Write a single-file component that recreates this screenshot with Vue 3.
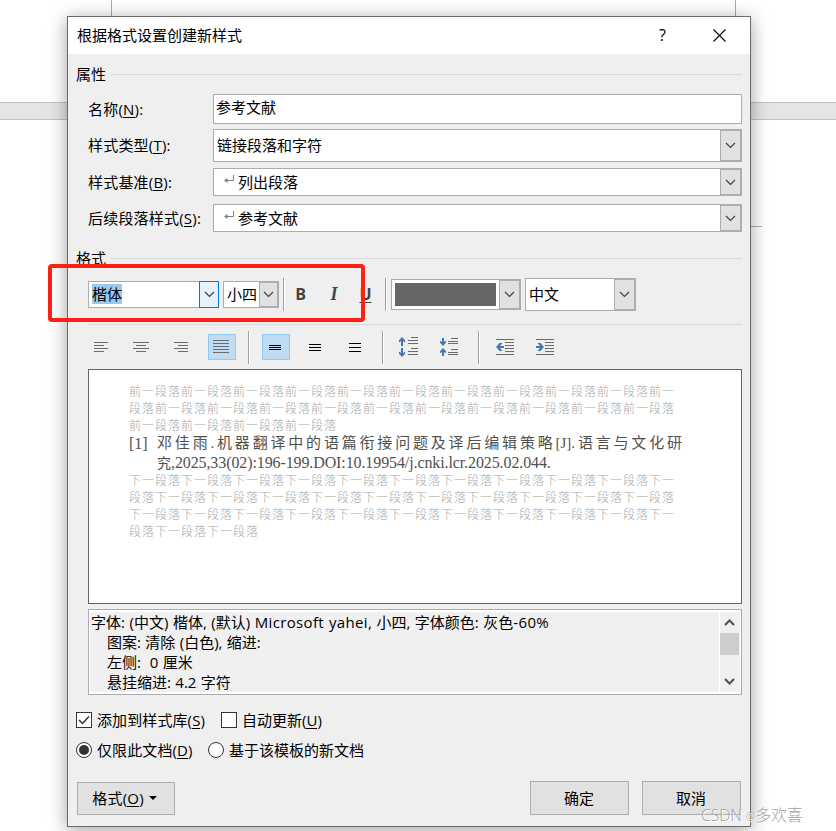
<script setup>
const before = [
  '前一段落'.repeat(10) + '前一',
  '段落' + '前一段落'.repeat(10),
  '前一段落'.repeat(4),
]
const after = [
  '下一段落'.repeat(10) + '下一',
  '段落' + '下一段落'.repeat(10),
  '下一段落'.repeat(10) + '下一',
  '段落' + '下一段落'.repeat(2),
]
</script>

<template>
  <div class="desk">
    <div class="sheet"><div class="margins"></div></div>
    <div class="gap"></div>
    <div class="tick"></div>

    <section class="dialog">
      <header class="title">
        <span class="caption">根据格式设置创建新样式</span>
        <span class="help">?</span>
        <svg class="close" width="13" height="13" viewBox="0 0 13 13"><path d="M.5 .5 12.5 12.5M12.5 .5 .5 12.5" /></svg>
      </header>

      <div class="body">
        <div class="group first"><span>属性</span><i></i></div>

        <div class="field name">
          <label>名称(<u>N</u>):</label>
          <div class="input">参考文献</div>
        </div>
        <div class="field type">
          <label>样式类型(<u>T</u>):</label>
          <div class="combo"><span>链接段落和字符</span><b class="drop"><svg width="11" height="7" viewBox="0 0 11 7"><path d="M1 1 5.5 5.5 10 1" /></svg></b></div>
        </div>
        <div class="field base">
          <label>样式基准(<u>B</u>):</label>
          <div class="combo"><svg class="ret" width="10" height="9" viewBox="0 0 10 9"><path d="M9.5 0V5.5H1" /><path class="tip" d="M0 5.5 3.5 3V8Z" /></svg><span>列出段落</span><b class="drop"><svg width="11" height="7" viewBox="0 0 11 7"><path d="M1 1 5.5 5.5 10 1" /></svg></b></div>
        </div>
        <div class="field next">
          <label>后续段落样式(<u>S</u>):</label>
          <div class="combo"><svg class="ret" width="10" height="9" viewBox="0 0 10 9"><path d="M9.5 0V5.5H1" /><path class="tip" d="M0 5.5 3.5 3V8Z" /></svg><span>参考文献</span><b class="drop"><svg width="11" height="7" viewBox="0 0 11 7"><path d="M1 1 5.5 5.5 10 1" /></svg></b></div>
        </div>

        <div class="group second"><span>格式</span><i></i></div>

        <div class="fontbar">
          <div class="combo font"><span><mark>楷体</mark></span><b class="drop hot"><svg width="11" height="7" viewBox="0 0 11 7"><path d="M1 1 5.5 5.5 10 1" /></svg></b></div>
          <div class="combo size"><span>小四</span><b class="drop"><svg width="11" height="7" viewBox="0 0 11 7"><path d="M1 1 5.5 5.5 10 1" /></svg></b></div>
          <i class="sep"></i>
          <span class="glyph bold">B</span>
          <span class="glyph italic">I</span>
          <span class="glyph under">U</span>
          <i class="sep"></i>
          <div class="combo color"><div class="swatch"></div><b class="drop"><svg width="11" height="7" viewBox="0 0 11 7"><path d="M1 1 5.5 5.5 10 1" /></svg></b></div>
          <div class="combo lang"><span>中文</span><b class="drop"><svg width="11" height="7" viewBox="0 0 11 7"><path d="M1 1 5.5 5.5 10 1" /></svg></b></div>
        </div>

        <div class="rule"></div>

        <div class="parabar">
          <svg class="tool" width="28" height="26" viewBox="0 0 28 26"><path class="g" d="M6 8.5h14M6 11.5h10M6 14.5h14M6 17.5h10" /></svg>
          <svg class="tool" width="28" height="26" viewBox="0 0 28 26"><path class="g" d="M5 8.5h16M8 11.5h10M5 14.5h16M8 17.5h10" /></svg>
          <svg class="tool" width="28" height="26" viewBox="0 0 28 26"><path class="g" d="M6 8.5h14M10 11.5h10M6 14.5h14M10 17.5h10" /></svg>
          <svg class="tool on" width="28" height="26" viewBox="0 0 28 26"><path class="g" d="M5 6.5h16M5 9.5h16M5 12.5h16M5 15.5h16M5 18.5h16" /></svg>
          <i class="sep"></i>
          <svg class="tool on" width="28" height="26" viewBox="0 0 28 26"><path class="k" d="M7 11.5h12M7 13.5h12M7 15.5h12" /></svg>
          <svg class="tool" width="28" height="26" viewBox="0 0 28 26"><path class="k" d="M7 10.5h12M7 13.5h12M7 16.5h12" /></svg>
          <svg class="tool" width="28" height="26" viewBox="0 0 28 26"><path class="k" d="M7 9.5h12M7 13.5h12M7 17.5h12" /></svg>
          <i class="sep near"></i>
          <svg class="tool" width="28" height="26" viewBox="0 0 28 26">
            <path class="a" d="M8 3 11 6.2V8.5L9 7V12H7V7L5 8.5V6.2ZM8 23 11 19.8V17.5L9 19V14H7V19L5 17.5V19.8Z" />
            <path class="g" d="M17 3.5h7M14 6.5h10M14 9.5h10M17 14.5h7M14 17.5h10M14 20.5h10" />
          </svg>
          <svg class="tool last" width="28" height="26" viewBox="0 0 28 26">
            <path class="a" d="M9 12 12 8.7V6.7L10 8V4H8V8L6 6.7V8.7ZM9 14 12 17.3V19.3L10 18V22H8V18L6 19.3V17.3Z" />
            <path class="g" d="M17 4.5h7M14 7.5h10M14 9.5h10M17 15.5h7M14 18.5h10M14 20.5h10" />
          </svg>
          <i class="sep"></i>
          <svg class="tool" width="28" height="26" viewBox="0 0 28 26">
            <path class="g" d="M4 5.5h18M13 8.5h9M13 11.5h9M13 14.5h9M13 17.5h9M4 20.5h18" />
            <path class="a" d="M4 13 7.5 9H10.5L8 12H12V14H8L10.5 17H7.5Z" />
          </svg>
          <svg class="tool" width="28" height="26" viewBox="0 0 28 26">
            <path class="g" d="M4 5.5h18M13 8.5h9M13 11.5h9M13 14.5h9M13 17.5h9M4 20.5h18" />
            <path class="a" d="M12 13 8.5 9H5.5L8 12H4V14H8L5.5 17H8.5Z" />
          </svg>
        </div>

        <div class="preview">
          <div v-for="(line, i) in before" :key="'b' + i" class="ghost">{{ line }}</div>
          <div class="ref">
            <span class="num">[1]</span>
            <div class="lines">
              <div class="spread">邓佳雨.机器翻译中的语篇衔接问题及译后编辑策略[J].语言与文化研</div>
              <div class="tail">究<span>,2025,33(02):196-199.DOI:10.19954/j.cnki.lcr.2025.02.044.</span></div>
            </div>
          </div>
          <div v-for="(line, i) in after" :key="'a' + i" class="ghost">{{ line }}</div>
        </div>

        <div class="info">
          <div class="desc">
            <p class="wide">字体: (中文) 楷体, (默认) <span class="face">Microsoft yahei</span>, 小四, 字体颜色: 灰色<span class="face">-60%</span></p>
            <p class="in">图案: 清除 (白色), 缩进:</p>
            <p class="in">左侧:&nbsp; 0 厘米</p>
            <p class="in">悬挂缩进: 4.2 字符</p>
          </div>
          <div class="scroll">
            <svg width="19" height="21" viewBox="0 0 19 21"><path d="M5 13 9.5 8.5 14 13" /></svg>
            <div class="thumb"></div>
            <svg width="19" height="21" viewBox="0 0 19 21"><path d="M5 8 9.5 12.5 14 8" /></svg>
          </div>
        </div>

        <div class="opts checks">
          <svg width="16" height="16" viewBox="0 0 16 16"><rect x=".5" y=".5" width="15" height="15" /><path d="M3 8 6.5 11.5 13 4.5" /></svg>
          <span class="o1">添加到样式库(<u>S</u>)</span>
          <svg width="16" height="16" viewBox="0 0 16 16"><rect x=".5" y=".5" width="15" height="15" /></svg>
          <span>自动更新(<u>U</u>)</span>
        </div>
        <div class="opts radios">
          <svg width="16" height="16" viewBox="0 0 16 16"><circle cx="8" cy="8" r="7.5" /><circle class="dot" cx="8" cy="8" r="5" /></svg>
          <span class="o2">仅限此文档(<u>D</u>)</span>
          <svg width="16" height="16" viewBox="0 0 16 16"><circle cx="8" cy="8" r="7.5" /></svg>
          <span>基于该模板的新文档</span>
        </div>

        <footer class="actions">
          <div class="btn fmt"><span>格式(<u>O</u>)</span><svg width="8" height="4" viewBox="0 0 8 4"><path d="M0 0H8L4 4Z" /></svg></div>
          <div class="btn">确定</div>
          <div class="btn">取消</div>
        </footer>
      </div>
    </section>

    <div class="callout"></div>
    <div class="watermark">CSDN <small>@</small>多欢喜</div>
  </div>
</template>

<style>
body { background: #fff; overflow: hidden; }
</style>

<style scoped>
* { box-sizing: border-box; }
.desk { position: relative; width: 836px; height: 831px; overflow: hidden; background: #fff; color: #000; font: 15px/20px "Open Sans", "Noto Sans CJK SC", sans-serif; white-space: nowrap; }
.sheet { height: 102px; padding-left: 111px; }
.margins { width: 625px; height: 40px; border: solid #ababab; border-width: 0 1px; }
.gap { height: 18px; background: #e5e5e5; border: solid #c3c3c3; border-width: 1px 0; }
.tick { margin-left: 740px; width: 22px; height: 107px; border-bottom: 1px solid #ababab; }

.dialog { position: absolute; left: 67px; top: 16px; width: 684px; height: 811px; background: #efefef; border: 1px solid #6b6b6b; box-shadow: 0 3px 17px rgba(0,0,0,.38); }
.title { height: 37px; background: #fff; display: flex; align-items: center; padding: 0 24px 0 9px; }
.caption { flex: 1; padding-bottom: 2px; }
.help { width: 8px; margin-right: 46px; font-size: 16px; padding-bottom: 1px; }
.close path { stroke: #000; stroke-width: 1.1; fill: none; }
.body { padding: 0 8px 0 9px; display: flex; flex-direction: column; }
.group { display: flex; align-items: center; height: 20px; margin-left: -1px; }
.group i { flex: 1; height: 1px; margin-left: 5px; background: #d9d9d9; }
.group.first { margin-top: 10px; }
.group.second { margin-top: 16px; }

.field { display: flex; align-items: center; padding-left: 11px; }
.field label { width: 125px; letter-spacing: .2px; }
u { text-decoration: none; box-shadow: 0 1px 0 #000; display: inline-block; line-height: 16px; }
.input { flex: 1; height: 30px; border: 1px solid #abadb3; background: #fff; padding: 2px 2px; }
.field.name { margin-top: 10px; }
.field.type { margin-top: 5px; }
.field.type label { padding-bottom: 1px; }
.field.base { margin-top: 6px; }
.field.next { margin-top: 8px; }
.field .combo { flex: 1; height: 28px; }
.field.type .combo { height: 33px; }
.field.type .combo > span { padding-bottom: 2px; }
.combo { display: flex; border: 1px solid #abadb3; background: #fff; align-items: stretch; }
.combo > span { flex: 1; padding-left: 3px; display: flex; align-items: center; }
.ret { margin: 6px 1px 0 10px; flex: none; }
.ret path { fill: none; stroke: #808080; }
.ret .tip { fill: #808080; stroke: none; }
.drop { flex: none; width: 21px; display: flex; align-items: center; justify-content: center; background: #e1e1e1; border: 1px solid #abadb3; }
.drop path { fill: none; stroke: #404040; stroke-width: 1.2; }
.drop.hot { width: 20px; margin: -1px 0; background: #e5f1fb; border-color: #0078d7; }

.fontbar { display: flex; align-items: center; height: 33px; margin: 10px 0 0 11px; }
.font { width: 131px; height: 27px; }
.font > span { padding: 0 0 2px 3px; }
mark { background: #99c9ef; color: #000; line-height: 20px; }
.font .drop.hot { width: 20px; margin-right: -1px; }
.size { width: 56px; height: 27px; margin-left: 4px; }
.size > span, .lang > span { padding-bottom: 2px; }
.size .drop { width: 19px; }
.sep { width: 2px; height: 33px; background: #a0a0a0; border-right: 1px solid #fff; flex: none; }
.fontbar .sep { margin-left: 4px; }
.glyph { font-weight: 700; color: #444; width: 33px; text-align: center; font-size: 16px; padding: 0 2px 2px 0; }
.glyph.italic { font-family: "Liberation Serif", serif; font-style: italic; font-size: 18px; padding-right: 1px; }
.glyph.under { text-decoration: underline; text-decoration-thickness: 1px; text-underline-offset: 2px; text-decoration-skip-ink: none; padding-right: 4px; }
.fontbar .glyph + .sep { margin-left: 1px; }
.color { width: 130px; height: 31px; margin-left: 4px; }
.swatch { width: 101px; height: 23px; background: #666; margin: 3px auto 0 3px; }
.color .drop, .lang .drop { width: 21px; }
.lang { width: 111px; height: 33px; margin-left: 4px; }

.rule { height: 1px; background: #d9d9d9; margin: 13px 0 0 11px; }
.parabar { display: flex; align-items: flex-start; height: 33px; margin: 6px 0 5px 11px; }
.tool { flex: none; margin: 3px 12px 0 0; }
.tool.on { background: #c0dcf3; outline: 1px solid #90c8f6; outline-offset: -1px; }
.parabar .sep { margin: 0 12px 0 0; }
.parabar .sep.near { margin-right: 10px; }
.tool.last { margin-right: 16px; }
.tool .g, .tool .k { fill: none; stroke: #6b6b6b; stroke-width: 1; }
.tool .k { stroke: #000; }
.tool .a { fill: #4278b0; }

.preview { margin-left: 11px; height: 235px; background: #fff; border: 1px solid #646464; padding: 12px 0 0 40px; }
.ghost { font: 300 12px/17px "Noto Sans CJK SC", sans-serif; letter-spacing: 1px; color: #a8a8a8; }
.ref { display: flex; height: 38px; padding-top: 1px; font: 16px/19px "Liberation Serif", "Noto Sans CJK SC", serif; color: #505050; }
.num { width: 28px; }
.spread { width: 525px; font-size: 15px; text-align: justify; text-align-last: justify; height: 19px; }
.tail { height: 19px; font-size: 14px; }
.tail span { font-size: 16px; letter-spacing: -.105px; }

.info { margin: 5px 0 0 11px; height: 86px; border: 1px solid #abadb3; background: #fff; padding: 2px 1px 2px 1px; display: flex; }
.desc { flex: 1; background: #f0f0f0; padding-left: 1px; overflow: hidden; }
.desc p { margin: 0; height: 20px; line-height: 20px; }
.desc .wide { word-spacing: .65px; }
.face { letter-spacing: .35px; }
.desc .in { padding-left: 16px; word-spacing: .5px; }
.scroll { width: 20px; margin-left: 1px; background: #f0f0f0; display: flex; flex-direction: column; }
.scroll path { fill: none; stroke: #505050; stroke-width: 2; }
.thumb { height: 22px; width: 19px; background: #cdcdcd; margin-bottom: 16px; }

.opts { display: flex; align-items: center; height: 20px; gap: 5px; margin-left: -1px; }
.opts svg { fill: #fff; stroke: #333; flex: none; }
.opts path { fill: none; stroke-width: 1.5; }
.opts .dot { fill: #333; stroke: none; }
.checks { margin-top: 15px; }
.radios { margin-top: 10px; }
.o1 { width: 119px; letter-spacing: .1px; }
.o2 { width: 106px; letter-spacing: .1px; }

.actions { display: flex; margin-top: 21px; padding-right: 1px; }
.btn { width: 99px; height: 34px; border: 1px solid #adadad; background: #e1e1e1; display: flex; align-items: center; justify-content: center; margin-left: 13px; padding: 0 1px 1px 0; }
.btn.fmt { width: 98px; height: 33px; margin: 1px auto 0 0; gap: 5px; padding: 0 3px 2px 0; letter-spacing: .2px; }

.callout { position: absolute; left: 48px; top: 264px; width: 317px; height: 58px; border: 4px solid #ff2014; border-radius: 4px; }
.watermark { position: absolute; left: 701px; top: 805px; font: 300 16px/20px "Open Sans", "Noto Sans CJK SC", sans-serif; letter-spacing: -.2px; color: rgba(150,150,150,.9); text-shadow: 1px 1px 0 #fff; }
.watermark small { font-size: 11px; vertical-align: 1px; }
</style>
